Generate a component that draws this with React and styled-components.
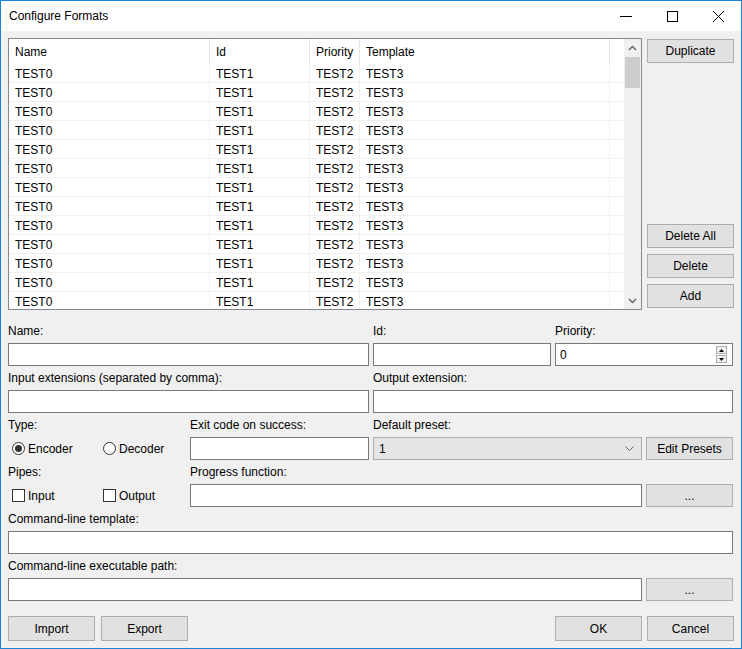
import React from "react";
import styled, { createGlobalStyle } from "styled-components";

const GlobalStyle = createGlobalStyle`
  html, body { margin: 0; padding: 0; background: #f0f0f0; }
  body {
    font-family: "Liberation Sans", Arial, sans-serif;
    font-size: 12px;
    color: #000;
  }
  * { box-sizing: border-box; }
`;

const Window = styled.div`
  width: 742px;
  height: 649px;
  border: 1px solid #1883d7;
  background: #f0f0f0;
  display: flex;
  flex-direction: column;
  overflow: hidden;
`;

const TitleBar = styled.div`
  height: 30px;
  flex: none;
  background: #fff;
  display: flex;
  align-items: center;
`;

const Title = styled.div`
  flex: 1;
  padding-left: 8px;
  font-size: 12px;
  color: #000;
`;

const CaptionButton = styled.div`
  width: 46px;
  height: 30px;
  display: flex;
  align-items: center;
  justify-content: center;
`;

const Client = styled.div`
  flex: 1;
  padding: 7px 7px 0 7px;
  display: flex;
  flex-direction: column;
`;

const TopSection = styled.div`
  display: flex;
  gap: 5px;
  height: 272px;
  flex: none;
`;

const ListBox = styled.div`
  width: 634px;
  height: 272px;
  border: 1px solid #828790;
  background: #fff;
  display: flex;
  overflow: hidden;
`;

const GridArea = styled.div`
  flex: 1;
  display: flex;
  flex-direction: column;
  overflow: hidden;
`;

const HeaderRow = styled.div`
  display: flex;
  height: 25px;
  flex: none;
`;

const HeaderCell = styled.div`
  width: ${(p) => (p.$w ? `${p.$w}px` : "auto")};
  flex: ${(p) => (p.$w ? "none" : "1")};
  border-right: ${(p) => (p.$w ? "1px solid #e5e5e5" : "none")};
  padding-left: 6px;
  display: flex;
  align-items: center;
  white-space: nowrap;
`;

const Row = styled.div`
  display: flex;
  height: 19px;
  flex: none;
  border-bottom: 1px solid #f0f0f0;
`;

const Cell = styled.div`
  width: ${(p) => (p.$w ? `${p.$w}px` : "auto")};
  flex: ${(p) => (p.$w ? "none" : "1")};
  border-right: ${(p) => (p.$w ? "1px solid #f0f0f0" : "none")};
  padding-left: 6px;
  padding-top: 1px;
  line-height: 18px;
  white-space: nowrap;
`;

const ScrollBar = styled.div`
  width: 17px;
  flex: none;
  background: #f0f0f0;
  display: flex;
  flex-direction: column;
`;

const ScrollArrow = styled.div`
  height: 17px;
  flex: none;
  display: flex;
  align-items: center;
  justify-content: center;
`;

const ScrollThumb = styled.div`
  height: 31px;
  margin: 1px 1px 0 1px;
  background: #cdcdcd;
  flex: none;
`;

const ScrollTrack = styled.div`
  flex: 1;
`;

const SideButtons = styled.div`
  width: 87px;
  display: flex;
  flex-direction: column;
  gap: 6px;
  padding: 1px 0 2px 0;
`;

const Button = styled.div`
  width: ${(p) => (p.$w ? `${p.$w}px` : "100%")};
  height: ${(p) => (p.$h ? `${p.$h}px` : "24px")};
  flex: none;
  background: #e1e1e1;
  border: 1px solid #adadad;
  display: flex;
  align-items: center;
  justify-content: center;
  color: #000;
  margin-top: ${(p) => (p.$pushDown ? "auto" : "0")};
`;

const FormGrid = styled.div`
  margin-top: 14px;
  display: grid;
  grid-template-columns: 178px 179px 178px 87px 87px;
  column-gap: 4px;
  row-gap: 5px;
`;

const Field = styled.div`
  grid-column: ${(p) => p.$col};
  display: flex;
  flex-direction: column;
  gap: 4px;
`;

const Label = styled.div`
  height: 15px;
  line-height: 15px;
  white-space: nowrap;
`;

const TextBox = styled.div`
  height: 23px;
  border: 1px solid #7a7a7a;
  background: #fff;
  display: flex;
  align-items: center;
  padding-left: 4px;
`;

const SpinText = styled.div`
  flex: 1;
`;

const SpinColumn = styled.div`
  display: flex;
  flex-direction: column;
  gap: 1px;
  margin-right: 5px;
`;

const SpinButton = styled.div`
  width: 11px;
  height: 8px;
  border: 1px solid #adadad;
  background: #f0f0f0;
  display: flex;
  align-items: center;
  justify-content: center;
`;

const Combo = styled.div`
  height: 23px;
  border: 1px solid #adadad;
  background: #e5e5e5;
  display: flex;
  align-items: center;
  padding: 0 7px 0 5px;
`;

const ComboText = styled.div`
  flex: 1;
`;

const OptionRow = styled.div`
  height: 23px;
  display: grid;
  grid-template-columns: 91px 91px;
  align-items: center;
  padding-left: 4px;
`;

const Option = styled.div`
  display: flex;
  align-items: center;
  gap: 3px;
`;

const RadioCircle = styled.span`
  width: 13px;
  height: 13px;
  border-radius: 50%;
  border: 1px solid #333;
  background: #fff;
  display: flex;
  align-items: center;
  justify-content: center;
  flex: none;
`;

const RadioDot = styled.span`
  width: 7px;
  height: 7px;
  border-radius: 50%;
  background: #333;
`;

const CheckBox = styled.span`
  width: 13px;
  height: 13px;
  border: 1px solid #333;
  background: #fff;
  flex: none;
`;

const BottomBar = styled.div`
  margin-top: 15px;
  display: flex;
  justify-content: space-between;
`;

const ButtonGroup = styled.div`
  display: flex;
  gap: ${(p) => p.$gap}px;
`;

const columns = [
  { key: "Name", w: 201, v: "TEST0" },
  { key: "Id", w: 100, v: "TEST1" },
  { key: "Priority", w: 50, v: "TEST2" },
  { key: "Template", w: 250, v: "TEST3" },
];

const rows = Array.from({ length: 13 }, (_, i) => i);

function Chevron({ up }) {
  return (
    <svg width="9" height="6" viewBox="0 0 9 6">
      <polyline
        points={up ? "1,5 4.5,1.5 8,5" : "1,1 4.5,4.5 8,1"}
        fill="none"
        stroke="#606060"
        strokeWidth="1.4"
      />
    </svg>
  );
}

function SpinArrow({ up }) {
  return (
    <svg width="5" height="3" viewBox="0 0 5 3">
      <polygon points={up ? "0,3 2.5,0 5,3" : "0,0 2.5,3 5,0"} fill="#000" />
    </svg>
  );
}

export default function App() {
  return (
    <>
      <GlobalStyle />
      <Window>
        <TitleBar>
          <Title>Configure Formats</Title>
          <CaptionButton>
            <svg width="12" height="12" viewBox="0 0 12 12">
              <line x1="0" y1="6.5" x2="12" y2="6.5" stroke="#000" strokeWidth="1" />
            </svg>
          </CaptionButton>
          <CaptionButton>
            <svg width="11" height="11" viewBox="0 0 11 11">
              <rect x="0.5" y="0.5" width="10" height="10" fill="none" stroke="#000" strokeWidth="1" />
            </svg>
          </CaptionButton>
          <CaptionButton>
            <svg width="11" height="11" viewBox="0 0 11 11">
              <line x1="0" y1="0" x2="11" y2="11" stroke="#000" strokeWidth="1" />
              <line x1="11" y1="0" x2="0" y2="11" stroke="#000" strokeWidth="1" />
            </svg>
          </CaptionButton>
        </TitleBar>
        <Client>
          <TopSection>
            <ListBox>
              <GridArea>
                <HeaderRow>
                  {columns.map((c) => (
                    <HeaderCell key={c.key} $w={c.w}>
                      {c.key}
                    </HeaderCell>
                  ))}
                  <HeaderCell />
                </HeaderRow>
                {rows.map((r) => (
                  <Row key={r}>
                    {columns.map((c) => (
                      <Cell key={c.key} $w={c.w}>
                        {c.v}
                      </Cell>
                    ))}
                    <Cell />
                  </Row>
                ))}
              </GridArea>
              <ScrollBar>
                <ScrollArrow>
                  <Chevron up />
                </ScrollArrow>
                <ScrollThumb />
                <ScrollTrack />
                <ScrollArrow>
                  <Chevron />
                </ScrollArrow>
              </ScrollBar>
            </ListBox>
            <SideButtons>
              <Button>Duplicate</Button>
              <Button $pushDown>Delete All</Button>
              <Button>Delete</Button>
              <Button>Add</Button>
            </SideButtons>
          </TopSection>

          <FormGrid>
            <Field $col="1 / 3">
              <Label>Name:</Label>
              <TextBox />
            </Field>
            <Field $col="3 / 4">
              <Label>Id:</Label>
              <TextBox />
            </Field>
            <Field $col="4 / 6">
              <Label>Priority:</Label>
              <TextBox>
                <SpinText>0</SpinText>
                <SpinColumn>
                  <SpinButton>
                    <SpinArrow up />
                  </SpinButton>
                  <SpinButton>
                    <SpinArrow />
                  </SpinButton>
                </SpinColumn>
              </TextBox>
            </Field>

            <Field $col="1 / 3">
              <Label>Input extensions (separated by comma):</Label>
              <TextBox />
            </Field>
            <Field $col="3 / 6">
              <Label>Output extension:</Label>
              <TextBox />
            </Field>

            <Field $col="1 / 2">
              <Label>Type:</Label>
              <OptionRow>
                <Option>
                  <RadioCircle>
                    <RadioDot />
                  </RadioCircle>
                  Encoder
                </Option>
                <Option>
                  <RadioCircle />
                  Decoder
                </Option>
              </OptionRow>
            </Field>
            <Field $col="2 / 3">
              <Label>Exit code on success:</Label>
              <TextBox />
            </Field>
            <Field $col="3 / 5">
              <Label>Default preset:</Label>
              <Combo>
                <ComboText>1</ComboText>
                <svg width="9" height="5" viewBox="0 0 9 5">
                  <polyline points="0.5,0.5 4.5,4.5 8.5,0.5" fill="none" stroke="#606060" strokeWidth="1" />
                </svg>
              </Combo>
            </Field>
            <Field $col="5 / 6">
              <Label />
              <Button $h={23}>Edit Presets</Button>
            </Field>

            <Field $col="1 / 2">
              <Label>Pipes:</Label>
              <OptionRow>
                <Option>
                  <CheckBox />
                  Input
                </Option>
                <Option>
                  <CheckBox />
                  Output
                </Option>
              </OptionRow>
            </Field>
            <Field $col="2 / 5">
              <Label>Progress function:</Label>
              <TextBox />
            </Field>
            <Field $col="5 / 6">
              <Label />
              <Button $h={23}>...</Button>
            </Field>

            <Field $col="1 / 6">
              <Label>Command-line template:</Label>
              <TextBox />
            </Field>

            <Field $col="1 / 5">
              <Label>Command-line executable path:</Label>
              <TextBox />
            </Field>
            <Field $col="5 / 6">
              <Label />
              <Button $h={23}>...</Button>
            </Field>
          </FormGrid>

          <BottomBar>
            <ButtonGroup $gap={6}>
              <Button $w={87} $h={25}>Import</Button>
              <Button $w={87} $h={25}>Export</Button>
            </ButtonGroup>
            <ButtonGroup $gap={5}>
              <Button $w={87} $h={25}>OK</Button>
              <Button $w={87} $h={25}>Cancel</Button>
            </ButtonGroup>
          </BottomBar>
        </Client>
      </Window>
    </>
  );
}
